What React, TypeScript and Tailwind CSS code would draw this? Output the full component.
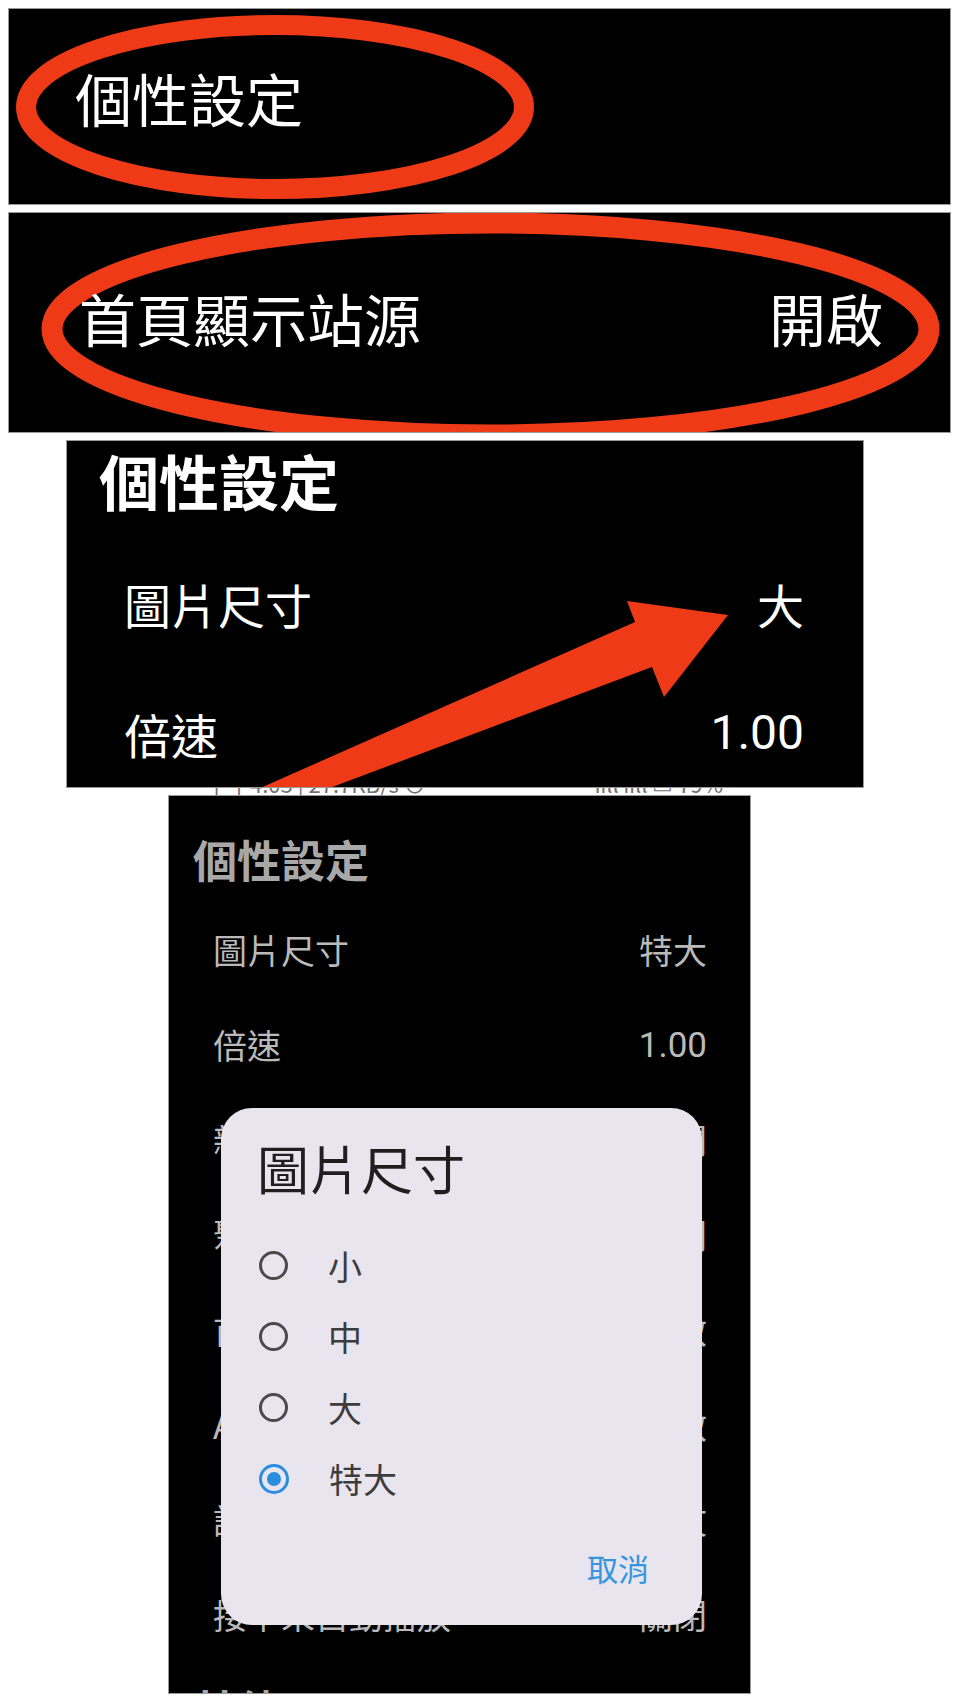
import React from "react";

const RED = "#ef3a17";

function Radio({ on }: { on?: boolean }) {
  if (on) {
    return (
      <div className="w-[30px] h-[30px] rounded-full border-[3.5px] border-[#2b8de0] flex items-center justify-center shrink-0">
        <div className="w-[14px] h-[14px] rounded-full bg-[#2b8de0]" />
      </div>
    );
  }
  return <div className="w-[29px] h-[29px] rounded-full border-[3px] border-[#4a4a4a] shrink-0" />;
}

export default function App() {
  const rows4: [string, string][] = [
    ["圖片尺寸", "特大"],
    ["倍速", "1.00"],
    ["新番通知", "關閉"],
    ["聚合搜尋", "關閉"],
    ["首頁顯示站源", "開啟"],
    ["AI 翻譯", "開啟"],
    ["語言", "繁體中文"],
    ["接下來自動播放", "關閉"],
  ];
  const opts = ["小", "中", "大", "特大"];
  return (
    <div className="w-[959px] h-[1705px] bg-white flex flex-col pt-[9px] font-['Noto_Sans_CJK_TC','Noto_Sans',sans-serif] overflow-hidden">
      {/* Panel 1 */}
      <div className="relative mx-[9px] h-[195px] bg-black overflow-hidden shadow-[0_0_0_1px_#9a9a9a] shrink-0">
        <svg className="absolute left-0 top-0 w-[940px] h-[195px] max-w-none" width="940" height="195" viewBox="0 0 940 195">
          <ellipse cx="266" cy="98" rx="249" ry="82" fill="none" stroke={RED} strokeWidth="20" />
        </svg>
        <div className="relative pt-[60px] pl-[66px] text-white text-[57px] leading-none">個性設定</div>
      </div>

      {/* Panel 2 */}
      <div className="relative mx-[9px] mt-[9px] h-[219px] bg-black overflow-hidden shadow-[0_0_0_1px_#9a9a9a] shrink-0">
        <svg className="absolute left-0 top-0 w-[940px] h-[219px] max-w-none" width="940" height="219" viewBox="0 0 940 219">
          <ellipse cx="481.5" cy="116" rx="438.5" ry="106" fill="none" stroke={RED} strokeWidth="21" />
        </svg>
        <div className="relative pt-[76px] pl-[70px] pr-[67px] flex justify-between text-white text-[57px] leading-none">
          <span>首頁顯示站源</span>
          <span>開啟</span>
        </div>
      </div>

      {/* Panel 3 */}
      <div className="relative ml-[67px] mt-[9px] w-[796px] h-[346px] bg-black overflow-hidden shadow-[0_0_0_1px_#9a9a9a] shrink-0">
        <div className="pt-[9px] pl-[32px] text-white text-[60px] font-bold leading-none h-[69px]">個性設定</div>
        <div className="mt-[28px] pl-[57px] pr-[59px] text-white text-[47px] leading-none">
          <div className="h-[130px] flex items-center justify-between">
            <span>圖片尺寸</span>
            <span>大</span>
          </div>
          <div className="h-[130px] flex items-center justify-between">
            <span>倍速</span>
            <span className="font-['Roboto',sans-serif] text-[48px]">1.00</span>
          </div>
        </div>
        <svg className="absolute left-0 top-0 w-[796px] h-[346px] max-w-none" width="796" height="346" viewBox="0 0 796 346">
          <polygon points="661,174 560,160 568,181 164,360 228,360 585,226 597,256" fill={RED} />
        </svg>
      </div>

      {/* Panel 4 */}
      <div className="ml-[169px] w-[581px] shrink-0">
        <div className="h-[9px] overflow-hidden bg-white">
          <div className="-mt-[15px] pl-[37px] pr-[27px] flex justify-between text-[22px] leading-none text-[#707070]">
            <span>下午4:03 | 27.7KB/s ⊙</span>
            <span>ııll ııll ▭ 79%</span>
          </div>
        </div>
        <div className="relative h-[897px] bg-black overflow-hidden shadow-[0_0_0_1px_#9a9a9a]">
          <div className="pt-[41px] pl-[24px] text-[#a8a8a8] text-[44px] font-bold leading-none h-[85px]">個性設定</div>
          <div className="mt-[21.5px] pl-[44px] pr-[43px] text-[#bababa] text-[34px] leading-none">
            {rows4.map(([k, v]) => (
              <div key={k} className="h-[95px] flex items-center justify-between">
                <span>{k}</span>
                <span className={v === "1.00" ? "font-['Roboto',sans-serif] text-[35px]" : ""}>{v}</span>
              </div>
            ))}
          </div>
          <div className="mt-[24px] pl-[24px] text-[#a8a8a8] text-[44px] font-bold leading-none">其他</div>

          {/* Dialog */}
          <div className="absolute left-[52px] top-[312px] w-[481px] h-[517px] rounded-[31px] bg-[#e9e5ef] flex flex-col">
            <div className="pt-[34px] pl-[36px] text-[52px] leading-none text-[#1f1f1f] h-[86px]">圖片尺寸</div>
            <div className="mt-[36px] pl-[38px]">
              {opts.map((o) => (
                <div key={o} className="h-[71px] flex items-center gap-[40px]">
                  <Radio on={o === "特大"} />
                  <span className="text-[34px] leading-none text-[#3c3c3c]">{o}</span>
                </div>
              ))}
            </div>
            <div className="mt-[38px] pr-[53px] flex justify-end">
              <span className="text-[31px] leading-none text-[#3596de]">取消</span>
            </div>
          </div>
        </div>
      </div>
    </div>
  );
}
